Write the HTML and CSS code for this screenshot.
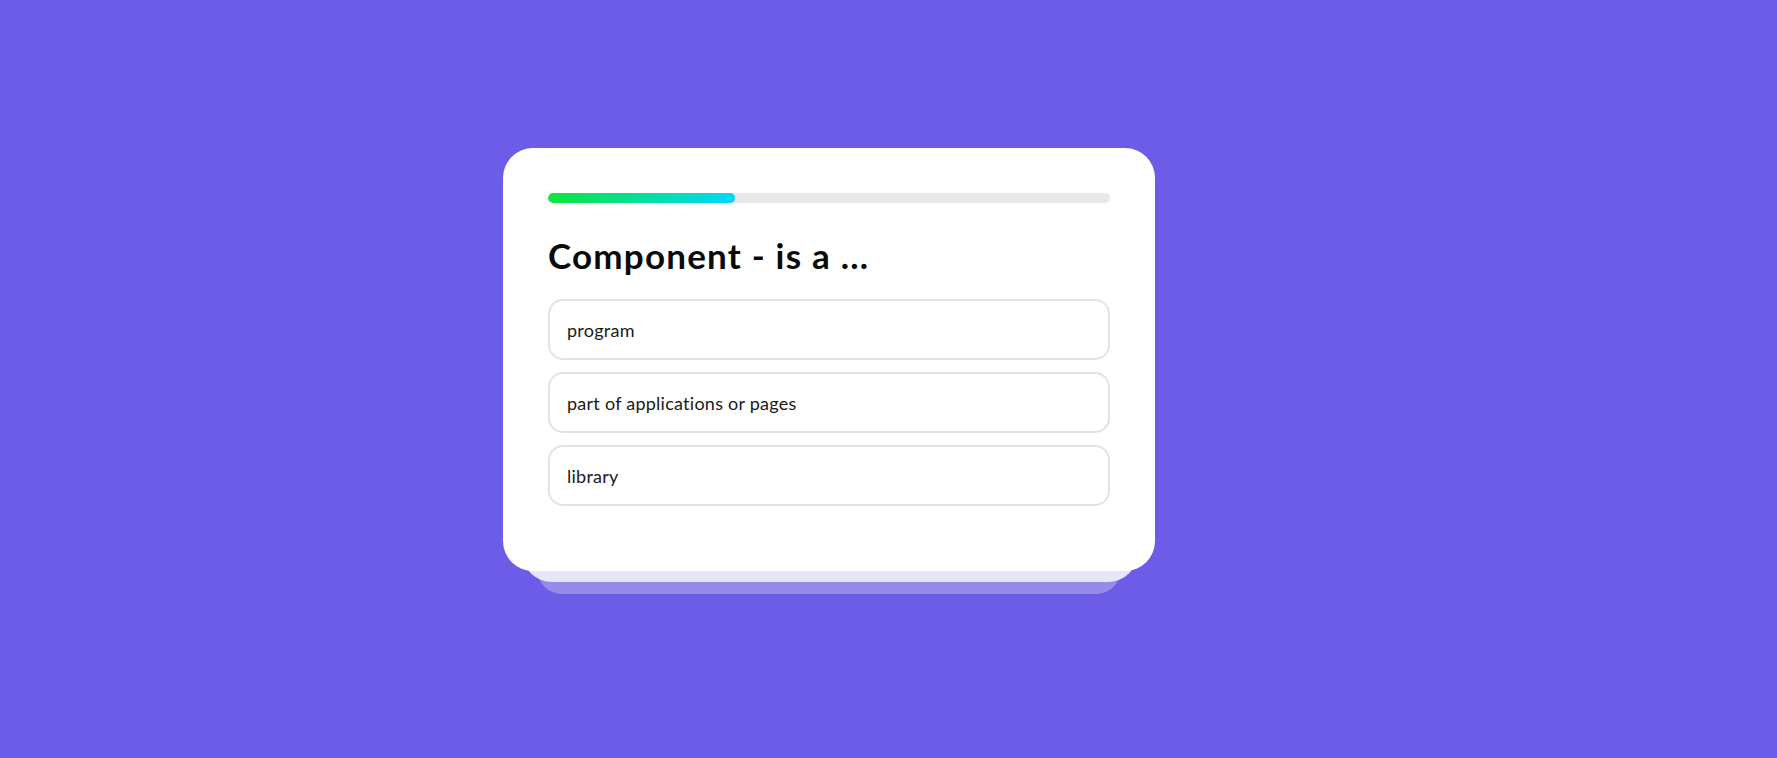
FILE: index.html
```html
<!DOCTYPE html>
<html lang="en">
<head>
<meta charset="utf-8">
<title>Quiz</title>
<link rel="stylesheet" href="styles.css">
</head>
<body>
<div class="app">
  <div class="stack">
    <div class="layer layer-back"></div>
    <div class="layer layer-mid"></div>
    <div class="card">
      <div class="progress"><div class="progress-fill" style="width: 33.33%"></div></div>
      <h1 class="title">Component - is a ...</h1>
      <ul class="options">
        <li class="option">program</li>
        <li class="option">part of applications or pages</li>
        <li class="option">library</li>
      </ul>
    </div>
  </div>
</div>
</body>
</html>
```

FILE: styles.css
```css
* { box-sizing: border-box; }
html, body { margin: 0; padding: 0; }
body {
  background: #6c5ce7;
  font-family: "Lato", "Noto Sans", sans-serif;
  height: 758px;
  overflow: hidden;
}
.app {
  padding: 148px 0 0 503px;
}
.stack {
  position: relative;
  width: 652px;
}
.layer {
  position: absolute;
}
.layer-mid {
  left: 19px;
  right: 17px;
  top: 40px;
  bottom: -11px;
  border-radius: 30px;
  background: #e8e6fa;
  z-index: 1;
}
.layer-back {
  left: 34px;
  right: 34px;
  top: 60px;
  bottom: -23px;
  border-radius: 25px;
  background: #958be9;
  z-index: 0;
}
.card {
  position: relative;
  z-index: 2;
  background: #fff;
  border-radius: 30px;
  padding: 45px 45px 65px 45px;
}
.progress {
  height: 10px;
  border-radius: 5px;
  background: #e8e8e8;
  overflow: hidden;
}
.progress-fill {
  height: 100%;
  border-radius: 5px;
  background: linear-gradient(90deg, #0ee53c 0%, #00d7fb 100%);
}
.title {
  margin: 31px 0 23px 0;
  font-size: 35px;
  line-height: 42px;
  font-weight: 700;
  letter-spacing: 1.2px;
  color: #0a0a0a;
}
.options {
  list-style: none;
  margin: 0;
  padding: 0;
  display: flex;
  flex-direction: column;
  gap: 12px;
}
.option {
  height: 61px;
  border: 2px solid #e3e3e3;
  border-radius: 15px;
  padding: 0 17px;
  display: flex;
  align-items: center;
  font-size: 18px;
  letter-spacing: 0.25px;
  color: #1a1a1a;
}
```
